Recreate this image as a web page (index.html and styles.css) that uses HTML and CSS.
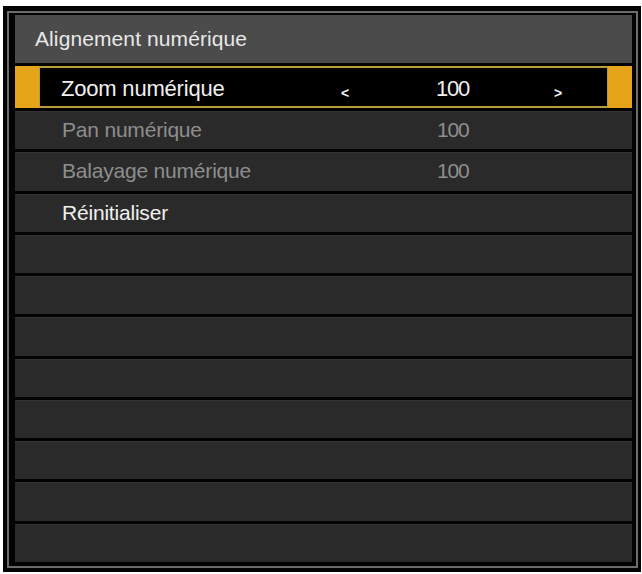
FILE: index.html
```html
<!DOCTYPE html>
<html lang="fr">
<head>
    <meta charset="UTF-8">
    <title>Alignement numérique</title>
    <link rel="stylesheet" href="styles.css">
</head>
<body>
    <div class="frame">
        <div class="frame-inner">
            <div class="panel">
                <div class="panel-title">Alignement numérique</div>

                <div class="row-selected">
                    <div class="gold-tab"></div>
                    <div class="selected-body">
                        <span class="label">Zoom numérique</span>
                        <span class="arrow">&lt;</span>
                        <span class="value">100</span>
                        <span class="arrow">&gt;</span>
                    </div>
                    <div class="gold-tab"></div>
                </div>

                <div class="row disabled">
                    <span class="label">Pan numérique</span>
                    <span class="arrow"></span>
                    <span class="value">100</span>
                </div>
                <div class="row disabled">
                    <span class="label">Balayage numérique</span>
                    <span class="arrow"></span>
                    <span class="value">100</span>
                </div>
                <div class="row">
                    <span class="label">Réinitialiser</span>
                </div>
                <div class="row"></div>
                <div class="row"></div>
                <div class="row"></div>
                <div class="row"></div>
                <div class="row"></div>
                <div class="row"></div>
                <div class="row"></div>
                <div class="row"></div>
            </div>
        </div>
    </div>
</body>
</html>
```

FILE: styles.css
```css
:root {
    --frame-black: #030303;
    --frame-line: #6c6c6c;
    --title-bg: #4b4b4b;
    --row-bg: #2a2a2a;
    --gold: #e6a419;
    --gold-line: #b99c3e;
    --text: #f0f0f0;
    --text-dim: #8e8e8e;
}

body {
    margin: 0;
    background-color: #ffffff;
    font-family: 'Liberation Sans', Arial, sans-serif;
}

.frame {
    width: 638px;
    height: 566px;
    margin: 6px 0 0 3px;
    box-sizing: border-box;
    padding: 5px 3px 4px 4px;
    background-color: var(--frame-black);
}

.frame-inner {
    height: 100%;
    box-sizing: border-box;
    border: 2px solid var(--frame-line);
    padding: 2px 4px 4px 6px;
    background-color: var(--frame-black);
}

.panel {
    height: 100%;
    display: flex;
    flex-direction: column;
    gap: 3px;
    background-color: var(--frame-black);
}

.panel-title {
    height: 48px;
    flex: none;
    display: flex;
    align-items: center;
    padding-left: 20px;
    background-color: var(--title-bg);
    color: #e8e8e8;
    font-size: 21px;
    letter-spacing: 0.1px;
}

.row-selected {
    height: 42px;
    flex: none;
    display: flex;
}

.gold-tab {
    width: 24px;
    background-color: var(--gold);
}

.selected-body {
    flex: 1;
    display: grid;
    grid-template-columns: 280px 95px 118px auto;
    align-items: center;
    padding: 3px 0 0 21px;
    border: 2px solid var(--gold-line);
    border-left-width: 1px;
    border-right-width: 1px;
    background-color: #000000;
    color: var(--text);
    font-size: 22px;
}

.row {
    flex: 1;
    display: grid;
    grid-template-columns: 280px 95px 118px auto;
    align-items: center;
    padding-left: 47px;
    background-color: var(--row-bg);
    box-shadow: inset 0 1px 0 #333333;
    color: var(--text);
    font-size: 21px;
}

.row.disabled {
    color: var(--text-dim);
}

.label {
    letter-spacing: -0.2px;
}

.arrow {
    font-size: 14px;
    font-weight: bold;
    padding-top: 8px;
}

.value {
    letter-spacing: -1.2px;
}
```
